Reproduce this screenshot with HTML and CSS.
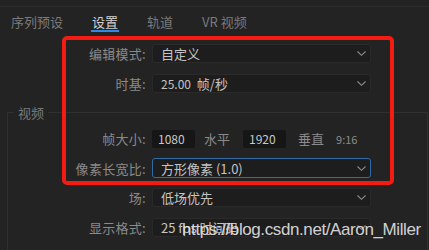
FILE: index.html
```html
<!DOCTYPE html>
<html lang="zh-CN">
  <head>
    <meta charset="UTF-8" />
    <meta name="viewport" content="width=device-width, initial-scale=1.0" />
    <title>序列设置</title>
    <link rel="stylesheet" href="styles.css">
  </head>
  <body>
    <div class="panel">
      <div class="topline"></div>
      <div class="tabs">
        <span class="tab">序列预设</span>
        <span class="tab active">设置</span>
        <span class="tab">轨道</span>
        <span class="tab">VR 视频</span>
      </div>

      <div class="form">
        <div class="row">
          <label>编辑模式:</label>
          <div class="select">
            <span>自定义</span>
            <svg class="chevron" width="9" height="5" viewBox="0 0 9 5"><path d="M0.5 0.5 L4.5 4.3 L8.5 0.5" /></svg>
          </div>
        </div>
        <div class="row">
          <label>时基:</label>
          <div class="select">
            <span><span class="num-text">25.00</span>&nbsp; 帧/秒</span>
            <svg class="chevron" width="9" height="5" viewBox="0 0 9 5"><path d="M0.5 0.5 L4.5 4.3 L8.5 0.5" /></svg>
          </div>
        </div>

        <fieldset class="group">
          <legend>视频</legend>
          <div class="row size-row">
            <label>帧大小:</label>
            <div class="size">
              <span class="field">1080</span>
              <span class="unit first">水平</span>
              <span class="field">1920</span>
              <span class="unit">垂直</span>
              <span class="ratio">9:16</span>
            </div>
          </div>
          <div class="row">
            <label>像素长宽比:</label>
            <div class="select focused">
              <span>方形像素 (1.0)</span>
              <svg class="chevron" width="9" height="5" viewBox="0 0 9 5"><path d="M0.5 0.5 L4.5 4.3 L8.5 0.5" /></svg>
            </div>
          </div>
          <div class="row">
            <label>场:</label>
            <div class="select">
              <span>低场优先</span>
              <svg class="chevron" width="9" height="5" viewBox="0 0 9 5"><path d="M0.5 0.5 L4.5 4.3 L8.5 0.5" /></svg>
            </div>
          </div>
          <div class="row">
            <label>显示格式:</label>
            <div class="select">
              <span>25 fps 时间码</span>
              <svg class="chevron" width="9" height="5" viewBox="0 0 9 5"><path d="M0.5 0.5 L4.5 4.3 L8.5 0.5" /></svg>
            </div>
          </div>
        </fieldset>
      </div>

      <div class="highlight"></div>
      <div class="watermark">https://blog.csdn.net/Aaron_Miller</div>
    </div>
  </body>
</html>
```

FILE: styles.css
```css
* {
  margin: 0;
  padding: 0;
  box-sizing: border-box;
}

body {
  font-family: "Noto Sans CJK SC", "Noto Sans", sans-serif;
  background-color: #232323;
  color: #8a8a8a;
  overflow: hidden;
}

.panel {
  position: relative;
  width: 429px;
  height: 250px;
  overflow: hidden;
}

.topline {
  height: 7px;
  border-bottom: 1px solid #2d2d2d;
}

.tabs {
  display: flex;
  gap: 27px;
  height: 26px;
  padding-left: 10px;
}

.tab {
  padding: 6px 1px 0;
  font-size: 13px;
  line-height: 17px;
  color: #7a7a7a;
  border-bottom: 2px solid transparent;
  height: 25px;
}

.tab.active {
  color: #d2d2d2;
  border-bottom-color: #2d8ae6;
}

.form {
  padding: 11px 0 0 8px;
}

.row {
  display: grid;
  grid-template-columns: 138px 219px;
  column-gap: 6px;
  align-items: center;
  height: 19px;
  margin-bottom: 11px;
}

.row label {
  text-align: right;
  font-size: 13px;
  line-height: 19px;
  color: #8a8a8a;
  letter-spacing: 0.3px;
}

.select {
  display: flex;
  justify-content: space-between;
  align-items: center;
  height: 19px;
  padding: 0 4px 0 8px;
  background-color: #1d1d1d;
  border: 1px solid #2a2a2a;
  border-radius: 3px;
  font-size: 13px;
  color: #c4c4c4;
}

.select.focused {
  height: 20px;
  border-color: #2f6ca8;
}

.num-text {
  font-size: 12px;
}

.chevron path {
  fill: none;
  stroke: #8a8a8a;
  stroke-width: 1.1;
}

.group {
  margin: 6px 1px 0 -1px;
  padding: 8px 0 0 0;
  border: none;
  border-top: 1px solid #303030;
  border-left: 1px solid #303030;
  border-right: 1px solid #303030;
  height: 200px;
}

.group legend {
  margin-left: 6px;
  padding: 0 4px;
  font-size: 13px;
  line-height: 17px;
  color: #7a7a7a;
}

.group .row {
  grid-template-columns: 138px 219px;
}

.size-row {
  margin-bottom: 10px;
}

.size {
  display: flex;
  align-items: center;
  font-size: 13px;
}

.field {
  width: 43px;
  height: 18px;
  line-height: 18px;
  padding-left: 6px;
  background-color: #161616;
  border-radius: 2px;
  font-size: 12px;
  color: #c8c8c8;
}

.unit {
  margin: 0 12px;
  color: #8a8a8a;
}

.unit.first {
  margin: 0 13px 0 9px;
}

.ratio {
  font-size: 11px;
  color: #8a8a8a;
}

/* red annotation frame drawn over the form */
.highlight {
  position: absolute;
  left: 62px;
  top: 36px;
  width: 332px;
  height: 149px;
  border: 4px solid #f41c12;
  border-radius: 5px;
}

.watermark {
  position: absolute;
  left: 182px;
  top: 220px;
  font-family: "Liberation Sans", Arial, sans-serif;
  font-size: 17px;
  letter-spacing: -0.4px;
  color: rgba(228, 228, 228, 0.92);
  white-space: nowrap;
}
```
